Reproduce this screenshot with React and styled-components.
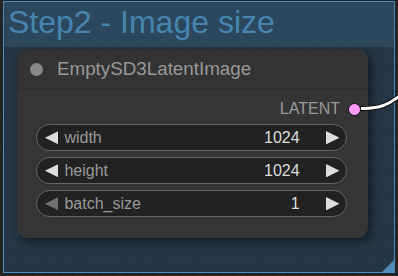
import React from "react";
import styled, { createGlobalStyle } from "styled-components";

const Global = createGlobalStyle`
  html, body { margin: 0; padding: 0; background: #232323; }
  body { font-family: "Liberation Sans", Arial, sans-serif; }
`;

const Canvas = styled.div`
  position: relative;
  width: 398px;
  height: 276px;
  box-sizing: border-box;
  padding: 1px 0 0 3px;
  overflow: hidden;
  background-color: #242424;
  background-image:
    linear-gradient(to right, rgba(0, 0, 0, 0.22) 1px, transparent 1px),
    linear-gradient(to bottom, rgba(0, 0, 0, 0.22) 1px, transparent 1px);
  background-size: 13.4px 13.4px;
  background-position: 5.6px 10.5px;
`;

const Group = styled.div`
  position: relative;
  width: 392px;
  height: 272px;
  box-sizing: border-box;
  border: 1px solid #4f8cb5;
  display: flex;
  flex-direction: column;
  background: rgba(40, 82, 118, 0.42);
`;

const GroupTitle = styled.div`
  height: 45px;
  flex: none;
  box-sizing: border-box;
  padding-left: 4px;
  font-size: 32px;
  line-height: 40px;
  color: #4785b0;
  background: rgba(60, 112, 150, 0.32);
  white-space: nowrap;
`;

const GroupBody = styled.div`
  flex: 1;
  padding: 2px 0 0 13px;
`;

const ResizeCorner = styled.div`
  position: absolute;
  right: 0;
  bottom: 0;
  width: 0;
  height: 0;
  border-style: solid;
  border-width: 0 0 12px 12px;
  border-color: transparent transparent #4f8cb5 transparent;
`;

const Node = styled.div`
  width: 351px;
  height: 189px;
  border-radius: 10px;
  background: #353535;
  box-shadow: 3px 3px 8px rgba(0, 0, 0, 0.5);
  display: flex;
  flex-direction: column;
  overflow: hidden;
`;

const NodeTitle = styled.div`
  height: 40px;
  flex: none;
  display: flex;
  align-items: center;
  gap: 14px;
  padding-left: 13px;
  background: #333333;
  border-bottom: 1px solid #2b2b2b;
  font-size: 18.8px;
  color: #999999;
`;

const TitleDot = styled.span`
  width: 13px;
  height: 13px;
  border-radius: 50%;
  background: #888888;
  flex: none;
`;

const NodeBody = styled.div`
  display: flex;
  flex-direction: column;
  padding-top: 6px;
`;

const OutputRow = styled.div`
  height: 26px;
  display: flex;
  align-items: center;
  justify-content: flex-end;
  gap: 8px;
  padding-right: 7px;
  font-size: 16px;
  color: #999999;
`;

const SlotDot = styled.span`
  width: 13px;
  height: 13px;
  box-sizing: border-box;
  border-radius: 50%;
  background: ${(p) => p.color};
  border: 1px solid #111;
  flex: none;
`;

const Widgets = styled.div`
  margin-top: 2px;
  display: flex;
  flex-direction: column;
  gap: 6px;
  padding: 0 21px 0 19px;
`;

const Widget = styled.div`
  height: 27px;
  box-sizing: border-box;
  border: 1px solid #666666;
  border-radius: 14px;
  background: #222222;
  display: flex;
  align-items: center;
  padding: 0 7px 0 8px;
  font-size: 16px;
`;

const Label = styled.span`
  color: #999999;
  margin-left: 6px;
  flex: 1;
  white-space: nowrap;
`;

const Value = styled.span`
  color: #dddddd;
  margin-right: 26px;
`;

const Arrow = styled.svg`
  width: 13.4px;
  height: 13.4px;
  flex: none;
  opacity: ${(p) => (p.$dim ? 0.42 : 1)};
`;

const Wire = styled.svg`
  position: absolute;
  left: 0;
  top: 0;
  pointer-events: none;
`;

const LeftArrow = ({ dim }) => (
  <Arrow viewBox="0 0 10 10" $dim={dim}>
    <polygon points="10,0 0,5 10,10" fill="#dddddd" />
  </Arrow>
);

const RightArrow = ({ dim }) => (
  <Arrow viewBox="0 0 10 10" $dim={dim}>
    <polygon points="0,0 10,5 0,10" fill="#dddddd" />
  </Arrow>
);

const widgets = [
  { name: "width", value: "1024", minDim: false },
  { name: "height", value: "1024", minDim: false },
  { name: "batch_size", value: "1", minDim: true },
];

export default function App() {
  return (
    <>
      <Global />
      <Canvas>
        <Group>
          <GroupTitle>Step2 - Image size</GroupTitle>
          <GroupBody>
            <Node>
              <NodeTitle>
                <TitleDot />
                EmptySD3LatentImage
              </NodeTitle>
              <NodeBody>
                <OutputRow>
                  LATENT
                  <SlotDot color="#ff9cf9" />
                </OutputRow>
                <Widgets>
                  {widgets.map((w) => (
                    <Widget key={w.name}>
                      <LeftArrow dim={w.minDim} />
                      <Label>{w.name}</Label>
                      <Value>{w.value}</Value>
                      <RightArrow />
                    </Widget>
                  ))}
                </Widgets>
              </NodeBody>
            </Node>
          </GroupBody>
          <ResizeCorner />
        </Group>
        <Wire width="398" height="276" viewBox="0 0 398 276">
          <path
            d="M361 108.5 C 378 108.5 388 106 402 94"
            fill="none"
            stroke="#000"
            strokeWidth="5"
          />
          <path
            d="M361 108.5 C 378 108.5 388 106 402 94"
            fill="none"
            stroke="#ffffff"
            strokeWidth="3"
          />
        </Wire>
      </Canvas>
    </>
  );
}
